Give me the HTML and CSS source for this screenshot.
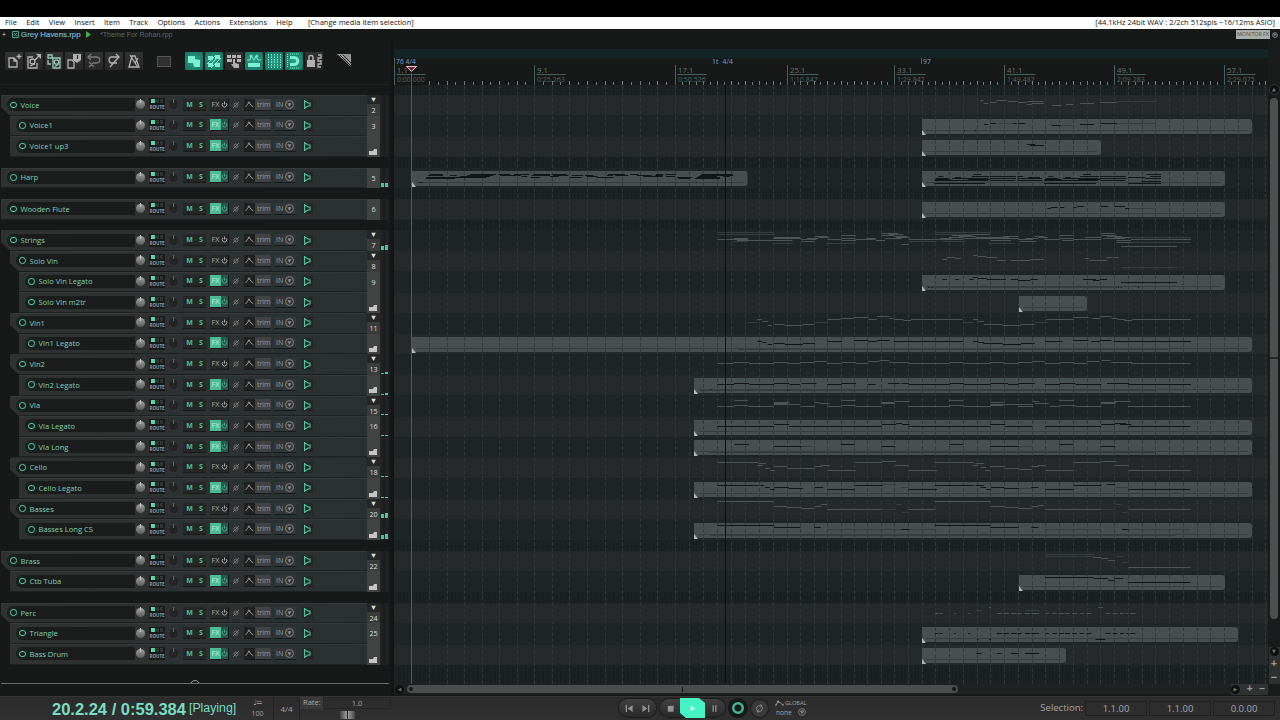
FILE: index.html
```html
<!DOCTYPE html>
<html lang="en">
<head>
    <meta charset="UTF-8">
    <meta name="viewport" content="width=device-width, initial-scale=1.0">
    <title>Grey Havens.rpp</title>
    <link rel="stylesheet" href="styles.css">
</head>
<body>

<nav class="menubar">
    <span>File</span><span>Edit</span><span>View</span><span>Insert</span><span>Item</span><span>Track</span><span>Options</span><span>Actions</span><span>Extensions</span><span>Help</span>
    <span class="last-action">[Change media item selection]</span>
    <span class="audio-info">[44.1kHz 24bit WAV : 2/2ch 512spls ~16/12ms ASIO]</span>
</nav>

<div class="tabs">
    <span class="tab-add">+</span>
    <svg class="tab-close" viewBox="0 0 7 7"><path d="M.5.5h6v6h-6zM2 2l3 3M5 2L2 5"/></svg>
    <span class="tab-active">Grey Havens.rpp</span>
    <svg class="tab-play" viewBox="0 0 5 7"><path d="M0 0l5 3.5L0 7z"/></svg>
    <span class="tab-other">*Theme For Rohan.rpp</span>
    <span class="monitor">MONITOR FX</span>
    <svg class="monitor-power" viewBox="0 0 6 6"><circle cx="3" cy="3" r="2.4"/><path d="M3 1v2.500M1.500 3h3"/></svg>
</div>

<main class="workspace">
    <section class="left">
        <div class="toolbar">
            <svg class="tool" viewBox="0 0 18 18"><path d="M4 6h5l3 3v6H4zM9 6v3h3M14 2v5M11.500 4.500h5"/></svg>
            <svg class="tool" viewBox="0 0 18 18"><path d="M8 5H3v11h9v-5M10 8l5-5"/><path class="fill" d="M11 2h5v5z"/><circle cx="7.500" cy="9.500" r="2.500"/><path d="M5 14l5-2"/></svg>
            <svg class="tool mint" viewBox="0 0 18 18"><path d="M8 6h7v10H8zM3 3h4v3H3zM3 8v4h3"/><circle cx="11.500" cy="10" r="2.200"/><path d="M9.500 14.500l4-2"/></svg>
            <svg class="tool" viewBox="0 0 18 18"><path d="M3 8h4l2 2v6H3z"/><path class="fill" d="M8 2h8v6l-4 3-4-3z"/><path class="dark" d="M12.500 3v4"/></svg>
            <svg class="tool dim" viewBox="0 0 18 18"><path d="M3 5h8c5 0 5 6 0 6H8M6 2L3 5l3 3M4 10l5 5M9 10l-5 5"/></svg>
            <svg class="tool" viewBox="0 0 18 18"><path d="M14 5H7c-4 0-4 6 0 6h5M11 2l3 3-3 3M5 15l7-8"/></svg>
            <svg class="tool" viewBox="0 0 18 18"><path d="M4 15L7 4h3l4 11zM5 3l7 11M13 6l-3 5"/></svg>
            <svg class="marquee" viewBox="0 0 15 12"><rect x=".5" y=".5" width="13" height="10"/></svg>
            <svg class="tool on" viewBox="0 0 18 18"><path class="fill" d="M3 4h7v3l5 1v7H9l-1-4H3z"/></svg>
            <svg class="tool on" viewBox="0 0 18 18"><path class="fill" d="M3 4h5v4H3zM10 3h5v4h-5zM3 11h5v4H3zM10 11h5v4h-5z"/><path d="M3 15L15 3M6 16L16 6M2 12L11 3"/></svg>
            <svg class="tool" viewBox="0 0 18 18"><path class="fill" d="M2 3h4v3H2zM7 3h4v3H7zM12 3h4v3h-4zM2 7h5v3H2zM8 7h2v4l4 1v4H9l-3-4h2zM12 7h4v3h-4z"/></svg>
            <svg class="tool on" viewBox="0 0 18 18"><path class="fill" d="M3 11h12v4H3z"/><path d="M2 8h3l1-4 3 4 2-4 2 4h3"/><circle cx="6" cy="4" r="1"/><circle cx="12" cy="4" r="1"/></svg>
            <svg class="tool on" viewBox="0 0 18 18"><path stroke-dasharray="1.500 1" d="M3.500 2v14M6.500 2v14M9.500 2v14M12.500 2v14M15.500 2v14"/></svg>
            <svg class="tool on" viewBox="0 0 18 18"><path class="thick" d="M5 5.500h4c5 0 5 7 0 7H5"/><path stroke-dasharray="1 1" d="M2.500 2v14M5 16h10M5 2h10"/></svg>
            <svg class="tool" viewBox="0 0 18 18"><path class="fill" d="M2 8h8v7H2z"/><path class="mid" d="M4 8V5c0-2 4-2 4 0v3"/><path d="M13 3h3v3h-3v3h3v3h-3v3h3"/></svg>
            <svg class="ruler-icon" viewBox="0 0 16 16"><path d="M0 1h14v13z"/><path class="cut" d="M3 2l11 11M6 2l8 8"/></svg>
        </div>
        <div class="tracks" id="tracks"></div>
        <div class="panel-end"><i></i></div>
    </section>

    <section class="arrange">
        <div class="region-strip"></div>
        <svg class="timeline" id="timeline" viewBox="394 58 874 626"></svg>
        <div class="hscroll">
            <i class="arrow">&#9664;</i>
            <div class="hthumb"><b></b><u></u><b></b></div>
            <div class="hzoom"><i class="arrow">&#9654;</i><span>+</span><span>&#8722;</span></div>
        </div>
    </section>

    <aside class="vscroll">
        <i class="arrow">&#9650;</i>
        <div class="vthumb"></div>
        <div class="vzoom"><i class="arrow">&#9660;</i><span>+</span><span>&#8722;</span></div>
    </aside>
</main>

<footer class="transport">
    <div class="time">20.2.24 / 0:59.384</div>
    <div class="state">[Playing]</div>
    <div class="bpm"><span class="beat">&#9833;=</span><span>100</span></div>
    <div class="sig">4/4</div>
    <div class="rate">
        <div><span>Rate:</span><b>1.0</b></div>
        <i></i>
    </div>
    <div class="buttons">
        <div class="pill">
            <svg viewBox="0 0 10 10"><path d="M1.500 1v8" class="line"/><path d="M8.500 1v8L3 5z"/></svg>
            <svg viewBox="0 0 10 10"><path d="M8.500 1v8" class="line"/><path d="M1.500 1v8L7 5z"/></svg>
        </div>
        <div class="pill play-pill">
            <svg viewBox="0 0 10 10"><path d="M2 2h6.500v6.500H2z"/></svg>
            <span class="play"><svg viewBox="0 0 10 10"><path d="M3 2v6l5-3z"/></svg></span>
            <svg viewBox="0 0 10 10"><path d="M3.500 1.500v7M6.500 1.500v7" class="line"/></svg>
        </div>
        <span class="record"></span>
        <span class="loop"><svg viewBox="0 0 10 10"><path d="M2 7V3.500L3.500 2H7M8 3v3.500L6.500 8H3M6 .5L8 2 6 3.500M4 6.500L2 8l2 1.500"/></svg></span>
        <div class="global">
            <div><svg viewBox="0 0 9 6"><path d="M1 5l2-3.500L5.500 3 8 5"/><circle cx="3" cy="1.500" r="1"/><circle cx="1" cy="5" r=".8"/><circle cx="8" cy="5" r=".8"/></svg>GLOBAL</div>
            <div>none <svg class="drop" viewBox="0 0 8 8"><circle cx="4" cy="4" r="3.400"/><path d="M2.500 3h3L4 5.500z"/></svg></div>
        </div>
    </div>
    <div class="selection">
        <span>Selection:</span><b>1.1.00</b><b>1.1.00</b><b>0.0.00</b>
    </div>
</footer>

<script src="script.js"></script>
</body>
</html>
```
FILE: styles.css
```css
* {
    box-sizing: border-box;
}
body {
    margin: 0;
    padding-top: 17px;
    width: 1280px;
    height: 720px;
    overflow: hidden;
    background: #000;
    color: #a5a5a5;
    font-family: "Open Sans", sans-serif;
    font-size: 8px;
    display: flex;
    flex-direction: column;
}
svg {
    display: block;
    flex: none;
}
.menubar {
    height: 12px;
    padding: 0 5px;
    background: #fff;
    color: #111;
    font-size: 7.5px;
    line-height: 10px;
    display: flex;
    gap: 9.3px;
    flex: none;
    white-space: nowrap;
}
.last-action {
    margin-left: 6px;
}
.audio-info {
    margin-left: auto;
}

/* project tabs */
.tabs {
    height: 11px;
    background: #171818;
    display: flex;
    align-items: center;
    flex: none;
    line-height: 10px;
    white-space: nowrap;
}
.tab-add {
    width: 12px;
    padding-left: 2px;
    color: #ddd;
    font-size: 7px;
}
.tab-close {
    width: 7px;
    height: 7px;
    fill: none;
    stroke: #4fa394;
}
.tab-active {
    width: 61px;
    margin: 0 4px 0 2px;
    color: #6fb4c9;
    font-family: "Liberation Sans", sans-serif;
    font-size: 7.9px;
    -webkit-text-stroke: .2px #6fb4c9;
}
.tab-play {
    width: 5px;
    height: 7px;
    fill: #3fae4b;
}
.tab-other {
    margin-left: 9px;
    color: #4f6c6b;
    font-family: "Liberation Sans", sans-serif;
    font-size: 7.1px;
}
.monitor {
    width: 34px;
    height: 9px;
    margin-left: auto;
    background: #a7aeab;
    color: #4c5250;
    font-size: 5.3px;
    line-height: 9px;
    text-align: center;
}
.monitor-power {
    width: 6px;
    height: 6px;
    margin: 0 2px;
    fill: none;
    stroke: #999;
    stroke-width: .8;
}

.workspace {
    height: 656px;
    background: #171818;
    display: flex;
    flex: none;
}
.left {
    width: 394px;
    border-right: 3px solid #131515;
    display: flex;
    flex-direction: column;
}
.toolbar {
    width: 389px;
    height: 45px;
    padding: 12px 0 0 4.500px;
    border-bottom: 1px solid #222424;
    display: flex;
    gap: 2px;
    flex: none;
}
.tool {
    width: 18px;
    height: 18px;
    background: linear-gradient(#333, #262626);
    border-radius: 1px;
    fill: none;
    stroke: #b2b2b2;
    stroke-width: 1.3;
}
.tool .fill {
    fill: #b2b2b2;
    stroke: none;
}
.tool .dark {
    stroke: #333;
}
.tool .thick {
    stroke-width: 3;
}
.tool .mid {
    stroke-width: 1.5;
}
.tool.dim {
    stroke: #777;
}
.tool.mint {
    stroke: #9ac9bb;
}
.tool.on {
    background: radial-gradient(#2ba088, #16705f);
    stroke: #7df0d4;
    stroke-width: 1;
}
.tool.on .fill {
    fill: #7df0d4;
}
.tool.on .thick {
    stroke-width: 3;
}
.marquee {
    width: 15px;
    height: 12px;
    margin: 4px 11px 0 12px;
    fill: #303030;
    stroke: #858585;
    stroke-dasharray: 1 1;
}
.ruler-icon {
    width: 16px;
    height: 16px;
    margin: 1px 0 0 12px;
    fill: #929292;
}
.ruler-icon .cut {
    fill: none;
    stroke: #222;
}

/* track control panel */
.tracks {
    width: 389px;
    padding-top: 10px;
    height: 580px;
    flex: none;
}
.track {
    height: 20.67px;
    display: flex;
}
.track.gap {
    margin-top: 10.67px;
}
.track.d0 { padding-left: 1px; }
.track.d1 { padding-left: 10px; }
.track.d2 { padding-left: 19px; }
.strip {
    flex: 1;
    padding-bottom: 1px;
    background: linear-gradient(90deg, #303131, #2e3131 50%, #2a3231 75%, #2a302f);
    border-top: 1px solid #383a39;
    border-bottom: 1px solid #1f2222;
    display: flex;
    align-items: center;
}
.track.folder .strip {
    clip-path: polygon(0 0, 100% 0, 100% 100%, 9px 100%, 0 58%);
}
.name {
    flex: 1;
    height: 13px;
    margin-left: 6px;
    padding-left: 3px;
    border-radius: 7px 0 0 7px;
    background: #1b1c1c;
    color: #7fcfb2;
    font-size: 7.6px;
    line-height: 12px;
    display: flex;
    align-items: center;
    white-space: nowrap;
}
.arm {
    width: 6.500px;
    height: 6.500px;
    margin-right: 4px;
    border: 1.6px solid #5ccba6;
    border-radius: 50%;
    box-shadow: 0 0 0 2px #15271f;
}
.knob {
    width: 9px;
    height: 9px;
    margin: 0 4.500px 0 1px;
    border-radius: 50%;
    background: linear-gradient(#a2a2a2, #5a5a5a);
    position: relative;
}
.knob::before {
    content: "";
    position: absolute;
    left: 4px;
    top: -1px;
    width: 1px;
    height: 4px;
    background: #c5c5c5;
}
.knob.pan {
    margin: 0 5px 0 4px;
    background: #232424;
    box-shadow: 0 0 0 1px #333434;
}
.knob.pan::before {
    background: #666;
}
.route {
    width: 16px;
    height: 13px;
    background: #191b1b;
    color: #9c9c9c;
    font-size: 4.500px;
    font-weight: bold;
    line-height: 5px;
    text-align: center;
}
.route i {
    display: block;
    width: 12px;
    height: 4px;
    margin: 1px 0 2px 2px;
    background: linear-gradient(90deg, #50d9ae 4px, #191b1b 4px, #191b1b 5px, #303433 5px, #303433 8px, #191b1b 8px, #191b1b 9px, #303433 9px);
}
.ms {
    width: 23px;
    height: 12px;
    background: #252827;
    color: #47c095;
    font-size: 7px;
    font-weight: bold;
    line-height: 12px;
    display: flex;
    justify-content: space-around;
}
.ms, .fx, .env, .input {
    border-bottom: 1px solid #191b1b;
}
.fx {
    width: 19px;
    height: 12px;
    margin-left: 4px;
    background: #272828;
    border-right: 1px solid #151616;
    color: #aaa;
    font-size: 7.300px;
    line-height: 11px;
    display: flex;
    align-items: center;
}
.fx span {
    width: 11px;
    text-align: center;
}
.fx svg {
    width: 7px;
    height: 7px;
    fill: none;
    stroke: #b5b5b5;
    stroke-width: .9;
}
.fx.active {
    background: #265747;
    color: #c9efe2;
}
.fx.active span {
    background: #4abb94;
}
.fx.active svg {
    stroke: #49ae8b;
}
.phase {
    width: 6px;
    height: 6px;
    margin: 0 5px 0 4px;
    fill: none;
    stroke: #777;
    stroke-width: .9;
}
.env {
    width: 27px;
    height: 12px;
    background: #414242;
    color: #989898;
    font-size: 7px;
    line-height: 11px;
    display: flex;
}
.env svg {
    width: 11px;
    height: 11px;
    margin-right: 2px;
    background: #1f2020;
    fill: none;
    stroke: #9a9a9a;
    stroke-width: .9;
}
.input {
    width: 22px;
    height: 12px;
    margin-left: 3px;
    background: #333636;
    color: #9c9c9c;
    font-size: 7px;
    line-height: 11px;
    display: flex;
    align-items: center;
    justify-content: space-evenly;
}
.input svg, .drop {
    width: 9px;
    height: 9px;
    fill: #8c8c8c;
}
.input circle, .drop circle {
    fill: none;
    stroke: #8c8c8c;
    stroke-width: .8;
}
.speaker {
    width: 11px;
    height: 11px;
    margin: 0 54px 0 6px;
    background: #222827;
    fill: none;
    stroke: #4fc79d;
    stroke-width: 1.1;
}
.number {
    width: 13px;
    background: #414343;
    color: #dedede;
    font-size: 7.2px;
    line-height: 20px;
    text-align: center;
}
.folder .number {
    background: linear-gradient(#252727 45%, #3a3c3c 45%);
    line-height: 10px;
}
.number b {
    display: block;
    height: 10px;
    font-size: 7.500px;
    line-height: 9px;
}
.number svg {
    width: 8px;
    height: 6px;
    margin: 12.500px 0 0 2px;
    fill: #c6c6c6;
}
.meter {
    width: 9px;
    padding: 0 1px 1px;
    background: linear-gradient(90deg, #222 3px, #171818 4px, #222 5px);
    display: flex;
    align-items: flex-end;
    gap: 1px;
}
.meter i {
    width: 3px;
    background: #44c99f;
}
.panel-end {
    width: 388px;
    height: 19px;
    margin-left: 1px;
    border-bottom: 1px solid #6c6d70;
    overflow: hidden;
}
.panel-end i {
    display: block;
    width: 10px;
    height: 10px;
    margin: 15px auto 0;
    border: 1.500px solid #999;
    border-radius: 50%;
}

/* arrange view */
.arrange {
    width: 874px;
    padding-top: 9px;
}
.region-strip {
    height: 9px;
    background: #142526;
}
.timeline {
    width: 874px;
    height: 626px;
    font-family: "Open Sans", sans-serif;
}
.lane-even { fill: #252929; }
.lane-odd { fill: #1f2526; }
.grid {
    stroke: #2d3535;
    stroke-dasharray: 4 2;
}
.grid-fine { stroke: #181d1f; }
.item { fill: #48504f; }
.item-grid {
    stroke: #343b3b;
    stroke-dasharray: 4 2;
}
.item-edge { stroke: #363d3c; }
.handle { fill: #b4b8b8; }
.notes {
    fill: none;
    stroke: #111516;
}
.notes.ghost { stroke: #4d5454; }
.notes.soft { stroke: #363d3d; }
.ruler-line { stroke: #47605e; }
.ruler-tick { stroke: #717979; }
.ruler-beat {
    fill: #647574;
    font-size: 7.8px;
}
.ruler-time {
    fill: #4c6965;
    font-size: 7px;
}
.tempo {
    fill: #79a2d6;
    font-size: 6.800px;
}
.edit-cursor { stroke: #8a4150; }
.play-cursor { stroke: #0d1010; }
.cursor-head {
    fill: #7b2338;
    stroke: #ddc8cd;
}
.hscroll {
    height: 10px;
    background: #202121;
    display: flex;
    align-items: center;
}
.arrow {
    width: 9px;
    height: 9px;
    border-radius: 50%;
    background: #0f1010;
    color: #6c6c6c;
    font: normal 5px/9px "DejaVu Sans", sans-serif;
    text-align: center;
}
.hscroll > .arrow {
    margin: 0 3px 0 1px;
}
.hthumb {
    width: 551px;
    height: 8px;
    padding: 0 2px;
    border-radius: 4px;
    background: #4b4c4c;
    display: flex;
    align-items: center;
    justify-content: space-between;
}
.hthumb b {
    width: 4px;
    height: 4px;
    border-radius: 50%;
    background: #191919;
}
.hthumb u {
    width: 1px;
    height: 5px;
    background: #111;
}
.hzoom {
    width: 37px;
    height: 11px;
    margin-left: auto;
    background: #303333;
    color: #999;
    font: bold 10px/10px "Liberation Sans", sans-serif;
    display: flex;
    align-items: center;
    justify-content: space-between;
    padding-right: 3px;
}
.vscroll {
    width: 12px;
    padding: 45px 1px 0;
    background: #1a1b1b;
    display: flex;
    flex-direction: column;
    align-items: center;
}
.vscroll > .arrow {
    outline: 1px solid #353636;
}
.vthumb {
    width: 8px;
    height: 521px;
    margin-top: 4px;
    border-radius: 4px;
    background: linear-gradient(#4e4f4f 259px, #262626 259px, #262626 261px, #4e4f4f 261px);
}
.vzoom {
    width: 11px;
    height: 37px;
    margin-top: 28px;
    background: #2f3131;
    color: #999;
    font: bold 11px/13px "Liberation Sans", sans-serif;
    display: flex;
    flex-direction: column;
    align-items: center;
    justify-content: space-between;
}

/* transport bar */
.transport {
    height: 24px;
    background: linear-gradient(#2b2b2b, #303030);
    border-top: 1px solid #353535;
    display: flex;
    align-items: center;
    flex: none;
    white-space: nowrap;
}
.time {
    width: 137px;
    margin-left: 52px;
    color: #76dfc3;
    font: bold 16.500px/22px "Liberation Sans", sans-serif;
}
.state {
    width: 53px;
    color: #76dfc3;
    font: 12.300px/22px "Liberation Sans", sans-serif;
    padding-bottom: 1px;
}
.bpm {
    width: 32px;
    height: 24px;
    border-right: 1px solid #242424;
    font-size: 7px;
    line-height: 12px;
    text-align: center;
    display: flex;
    flex-direction: column;
}
.bpm .beat {
    font: 8px/11px "DejaVu Sans", sans-serif;
    letter-spacing: -1px;
}
.sig {
    width: 26px;
    height: 24px;
    border-right: 1px solid #242424;
    line-height: 23px;
    text-align: center;
}
.rate {
    width: 92px;
    height: 24px;
    font-size: 7.500px;
    line-height: 11px;
}
.rate div {
    display: flex;
}
.rate span {
    width: 23px;
    padding-left: 3px;
    background: #3a3a3a;
}
.rate b {
    width: 68px;
    border: 1px solid #252525;
    font-weight: normal;
    line-height: 10px;
    text-align: center;
}
.rate i {
    display: block;
    width: 15px;
    height: 8px;
    margin: 2px 0 0 40px;
    background: linear-gradient(90deg, #444, #999 45%, #222 50%, #999 55%, #444);
}
.buttons {
    margin: -1px 0 0 227px;
    display: flex;
    align-items: center;
}
.pill {
    width: 37px;
    height: 18px;
    border-radius: 9px;
    background: linear-gradient(#414141, #292929);
    box-shadow: 0 0 1px 1px #1c1c1c;
    display: flex;
    align-items: center;
    justify-content: space-evenly;
}
.pill svg, .loop svg {
    width: 9px;
    height: 9px;
    fill: #929292;
}
.pill .line {
    stroke: #929292;
    stroke-width: 1.5;
}
.play-pill {
    width: 65px;
    margin-left: 4px;
    justify-content: space-between;
    padding: 0 6px;
}
.play {
    width: 25px;
    height: 20px;
    background: #46f3c2;
    clip-path: polygon(0 0, 19px 0, 100% 5px, 100% 100%, 6px 100%, 0 15px);
    display: flex;
    align-items: center;
    justify-content: center;
}
.play svg {
    fill: #d6fff2;
}
.record {
    width: 20px;
    height: 20px;
    margin: 0 3px 0 3px;
    border: 4px solid #151919;
    border-radius: 50%;
    background: radial-gradient(#151919 3px, #49b493 4px);
}
.loop {
    width: 17px;
    height: 17px;
    border-radius: 50%;
    background: #393939;
    box-shadow: 0 0 1px 1px #1c1c1c;
    display: flex;
    align-items: center;
    justify-content: center;
}
.loop svg {
    fill: none;
    stroke: #929292;
}
.global {
    margin: -1px 0 0 7px;
    font-size: 5.600px;
    line-height: 9px;
}
.global div {
    display: flex;
    align-items: center;
    gap: 1px;
}
.global div + div {
    gap: 6px;
    padding-left: 1px;
    font-size: 6.500px;
}
.global svg {
    width: 9px;
    height: 6px;
    fill: #aaa;
}
.global path {
    fill: none;
    stroke: #aaa;
    stroke-width: .8;
}
.global .drop {
    width: 8px;
    height: 8px;
}
.selection {
    margin: 0 5px 0 auto;
    font-size: 9.500px;
    line-height: 13px;
    display: flex;
    gap: 2px;
}
.selection b {
    width: 62px;
    height: 15px;
    border: 1px solid #212121;
    background: #2d2d2d;
    font-weight: normal;
    text-align: center;
}
```
FILE: script.js
```js
// name, depth, number, options (F folder, X fx active, G gap above, E end of folder), meter heights
const tracks = [
    ['Voice', 0, 2, 'F'],
    ['Voice1', 1, 3, 'X'],
    ['Voice1 up3', 1, 4, 'XE'],
    ['Harp', 0, 5, 'XG', 4, 4],
    ['Wooden Flute', 0, 6, 'XG'],
    ['Strings', 0, 7, 'FG', 4, 5],
    ['Solo Vln', 1, 8, 'F'],
    ['Solo Vln Legato', 2, 9, 'X'],
    ['Solo Vln m2tr', 2, 10, 'XE'],
    ['Vln1', 1, 11, 'F'],
    ['Vln1 Legato', 2, 12, 'XE'],
    ['Vln2', 1, 13, 'F', 1, 2],
    ['Vln2 Legato', 2, 14, 'XE', 1, 2],
    ['Vla', 1, 15, 'F', 1, 1],
    ['Vla Legato', 2, 16, 'X', 1, 1],
    ['Vla Long', 2, 17, 'XE'],
    ['Cello', 1, 18, 'F', 1, 1],
    ['Cello Legato', 2, 19, 'XE', 1, 1],
    ['Basses', 1, 20, 'F', 4, 5],
    ['Basses Long CS', 2, 21, 'XE', 4, 5],
    ['Brass', 0, 22, 'FG'],
    ['Ctb Tuba', 1, 23, 'XE'],
    ['Perc', 0, 24, 'FG'],
    ['Triangle', 1, 25, 'X'],
    ['Bass Drum', 1, 26, 'XE']
];

const ROW = 20.67, GAP = 10.67;
const laneTop = {};
let html = '', y = 95;

for (const [name, depth, num, opt, ml, mr] of tracks) {
    const has = c => opt.includes(c);
    if (has('G')) y += GAP;
    laneTop[num] = y;
    y += ROW;
    let label = num;
    if (has('F')) label = `<b>▼</b>${num}`;
    if (has('E')) label = '<svg viewBox="0 0 8 6"><path d="M0 2h4l1-2h3v6H0z"/></svg>';
    html += `
    <div class="track d${depth} ${has('F') ? 'folder' : ''} ${has('G') ? 'gap' : ''}">
        <div class="strip">
            <div class="name"><i class="arm"></i>${name}</div>
            <i class="knob"></i>
            <div class="route"><i></i>ROUTE</div>
            <i class="knob pan"></i>
            <div class="ms"><span>M</span><span>S</span></div>
            <div class="fx ${has('X') ? 'active' : ''}"><span>FX</span><svg viewBox="0 0 7 7"><path d="M2 2a2.300 2.300 0 1 0 3 0M3.500.5v3"/></svg></div>
            <svg class="phase" viewBox="0 0 6 6"><circle cx="3" cy="3" r="2"/><path d="M0 6l6-6"/></svg>
            <div class="env"><svg viewBox="0 0 11 11"><path d="M1.500 8L5 3.500 7 6l2.500 2"/><circle cx="5" cy="3.500" r=".7"/></svg>trim</div>
            <div class="input">IN<svg viewBox="0 0 8 8"><circle cx="4" cy="4" r="3.500"/><path d="M2.200 2.800h3.600L4 6z"/></svg></div>
            <svg class="speaker" viewBox="0 0 11 11"><path d="M2.500 1v9M3 2l3 2h2v3H6L3 9"/></svg>
        </div>
        <div class="number">${label}</div>
        <div class="meter">${ml ? `<i style="height:${ml}px"></i><i style="height:${mr}px"></i>` : ''}</div>
    </div>`;
}
document.getElementById('tracks').innerHTML = html;

// media items: track number, start, end
const items = [
    [3, 922, 1252], [4, 922, 1101], [5, 412, 747.5], [5, 922, 1225], [6, 922, 1225],
    [9, 922, 1225], [10, 1019, 1087], [12, 412, 1252], [14, 694, 1252], [16, 694, 1252],
    [17, 694, 1252], [19, 694, 1252], [21, 694, 1252], [23, 1019, 1225],
    [25, 922, 1238], [26, 922, 1066]
];

// ruler labels, the tempo changes the measure width
const marks = [
    [394.5, '1.1', '0:00.000'], [534.5, '9.1', '0:25.263'], [675.5, '17.1', '0:50.526'],
    [787.5, '25.1', '1:10.847'], [894.5, '33.1', '1:29.842'], [1004.5, '41.1', '1:49.487'],
    [1114.5, '49.1', '2:09.283'], [1224.5, '57.1', '2:29.075'], [1335, '', '']
];

const measures = [];
for (let i = 0; i < marks.length - 1; i++) {
    const w = (marks[i + 1][0] - marks[i][0]) / 8;
    for (let j = 0; j < 8; j++) measures.push([marks[i][0] + j * w, w]);
}
const snap = v => Math.floor(v) + .5;
const line = (cls, x1, y1, x2, y2) => `<path class="${cls}" d="M${x1} ${y1}L${x2} ${y2}"/>`;

let out = '<rect x="394" y="58" width="874" height="27" fill="#171818"/><rect x="394" y="85" width="874" height="599" fill="#1c2124"/>';

// beat lines show only between the lanes
for (const [x, w] of measures) {
    if (x > 1267) continue;
    for (let q = 1; q < 4; q++) out += line('grid-fine', snap(x + q * w / 4), 85, snap(x + q * w / 4), 684);
}
for (const [, , num] of tracks) {
    out += `<rect class="${num % 2 ? 'lane-odd' : 'lane-even'}" x="394" y="${laneTop[num].toFixed(1)}" width="874" height="${ROW}"/>`;
}
for (const [x, w] of measures) {
    if (x > 1267) continue;
    if (x > 412) out += line('grid', snap(x), 86, snap(x), 684);
    if (x > 425) out += line('ruler-tick', snap(x), 81, snap(x), 85);
    if (x > 412) out += line('ruler-tick', snap(x + w / 2), 82, snap(x + w / 2), 85);
}
for (const [num, a, b] of items) {
    const t = Math.round(laneTop[num] + 3.200), h = 15;
    out += `<path class="item" d="M${a} ${t}H${b - 3}q3 0 3 3v${h - 6}q0 3-3 3H${a}z"/>`;
    for (const [x] of measures) {
        if (x > a + 3 && x < b - 2) out += line('item-grid', snap(x), t, snap(x), t + h);
    }
    out += line('item-edge', a + 4, t + 11.5, b - 4, t + 11.5);
    out += `<path class="handle" d="M${a} ${t + h - 4}v5h4z"/>`;
}

// notes are [start, end, y] triples on a zoomed canvas with origin x0, y0
function notes(cls, x0, y0, k, list) {
    let d = '';
    for (let i = 0; i < list.length; i += 3) {
        d += `M${(x0 + list[i] / k).toFixed(1)} ${snap(y0 + list[i + 2] / 3)}H${(x0 + list[i + 1] / k).toFixed(1)}`;
    }
    out += `<path class="notes ${cls}" d="${d}"/>`;
}

// voice
notes('ghost', 880, 0, 3, [300,310,302, 310,325,310, 330,350,307, 350,380,301, 383,412,305, 415,440,308, 440,455,312, 442,490,304, 455,492,310, 515,545,316, 558,580,314, 600,642,310, 660,712,307]);
notes('soft', 880, 0, 3, [712,832,303, 355,435,370, 545,580,375, 712,830,370, 250,760,391, 390,600,454, 790,820,624]);
notes('', 880, 0, 3, [312,325,373, 330,348,370, 398,410,370, 414,436,370, 515,543,375, 600,642,373, 662,711,370, 253,256,392, 285,289,392, 440,465,433, 450,492,436]);
// harp
notes('', 390, 45, 3, [120,158,389, 115,160,392, 110,168,396, 106,165,399, 180,200,392, 168,235,396, 165,195,399, 240,318,388, 232,310,391, 210,300,395, 205,290,398, 325,360,388, 330,366,391, 372,418,388, 362,392,392, 395,412,395, 430,480,388, 425,478,392, 422,450,396, 455,480,391, 485,530,389, 490,535,392, 480,506,395, 545,580,392, 540,575,396, 585,610,392, 590,622,395, 620,640,398, 655,705,388, 650,668,392, 635,670,398, 675,715,391, 720,745,388, 740,785,391, 760,790,395, 798,820,387, 795,818,391, 790,818,395, 826,858,389, 828,855,393, 860,905,396, 865,900,400, 935,1028,388, 930,1030,391, 925,980,394, 920,990,397, 915,990,400, 1000,1020,394, 88,92,412, 94,98,412, 918,921,412]);
notes('', 880, 0, 3, [175,190,530, 168,205,534, 165,212,538, 163,238,542, 163,315,550, 225,243,532, 215,270,536, 235,280,541, 280,303,523, 275,328,530, 255,325,534, 265,330,538, 270,325,542, 330,408,530, 330,408,535, 332,406,541, 412,430,529, 412,486,536, 412,488,541, 445,480,532, 505,520,530, 498,535,534, 494,545,538, 492,570,542, 492,648,550, 555,573,532, 548,600,536, 565,610,541, 610,633,523, 600,658,530, 585,655,534, 595,660,538, 600,655,542, 660,738,530, 660,740,535, 662,736,541, 800,843,523, 810,843,530, 745,795,531, 795,843,536, 785,843,543, 745,843,550]);
// flute
notes('', 880, 0, 3, [502,512,626, 512,533,622, 540,553,623, 580,590,622, 592,611,619, 662,685,619, 703,735,619, 735,748,625, 450,468,640]);
notes('soft', 880, 0, 3, [750,810,624, 450,790,641]);
// strings folder
notes('soft', 700, 225, 2.703, [48,200,22, 48,200,27, 635,785,22, 635,785,27, 92,130,50, 200,250,54, 340,420,54, 565,640,50, 655,720,50, 1165,1327,36, 1165,1327,52, 780,850,54]);
notes('ghost', 700, 225, 2.703, [48,130,43, 92,130,39, 100,200,45, 200,236,37, 200,273,40, 200,250,46, 236,270,36, 273,315,44, 273,310,49, 290,320,40, 310,345,34, 320,350,38, 344,382,44, 382,422,31, 382,420,39, 382,422,46, 420,475,43, 450,475,40, 475,500,46, 490,535,25, 490,525,31, 510,550,29, 525,560,34, 500,545,40, 530,567,38, 545,565,58, 565,712,43, 650,680,39, 673,712,36, 680,735,31, 700,745,35, 735,785,28, 712,785,41, 745,785,37, 785,835,38, 770,860,41, 785,840,46, 820,860,35, 860,900,44, 865,910,49, 880,915,40, 905,930,35, 915,940,38, 930,972,44, 972,1010,32, 972,1010,40, 980,1010,46, 1010,1085,43, 1040,1085,38, 1083,1120,26, 1083,1125,31, 1100,1140,34, 1120,1165,37, 1090,1150,41, 1125,1165,45, 1125,1165,52, 1165,1327,43, 1138,1290,64]);
// solo violin
notes('ghost', 700, 225, 2.703, [655,668,102, 668,690,97, 690,705,99, 738,750,90, 750,775,94, 775,803,96, 803,827,106, 840,893,107, 893,900,102, 900,930,103, 1040,1052,101, 1052,1072,107, 1072,1100,105, 1098,1113,97, 1115,1133,98]);
notes('soft', 700, 225, 2.703, [1138,1290,126, 617,1130,186, 1190,1260,185, 876,920,248, 128,155,293, 309,345,293, 710,740,293, 905,940,293]);
notes('', 700, 225, 2.703, [655,668,163, 690,700,163, 728,740,163, 738,750,157, 750,775,160, 775,803,162, 803,827,164, 840,860,162, 860,893,165, 893,913,162, 1035,1070,162, 1062,1080,165, 1080,1100,163, 1138,1290,172, 616,619,186, 626,629,186, 1130,1133,186, 1137,1140,186, 1184,1187,186]);
// violins 1
notes('ghost', 700, 225, 2.703, [155,168,283, 168,185,290, 183,195,300, 200,229,297, 229,278,301, 278,309,297, 344,380,282, 380,416,280, 416,455,277, 455,478,282, 478,512,275, 512,524,279, 524,550,283, 550,570,287, 570,710,283, 738,752,283, 752,768,290, 766,818,298, 818,868,301, 868,905,297, 935,1010,283, 1010,1050,278, 1060,1082,280, 1082,1112,275, 1112,1130,280, 1130,1150,283, 1147,1168,287, 1168,1327,283]);
notes('', 700, 225, 2.703, [155,168,349, 168,180,352, 183,195,358, 200,229,355, 229,278,357, 278,311,355, 344,384,349, 416,455,346, 455,478,349, 478,512,346, 524,712,349, 738,752,349, 752,768,352, 766,785,356, 785,818,355, 818,868,358, 868,905,355, 933,980,349, 1008,1050,346, 1058,1082,349, 1082,1112,346, 1118,1327,349]);
notes('soft', 700, 225, 2.703, [103,1265,373, 0,1230,496]);
// violins 2
notes('ghost', 700, 225, 2.703, [48,92,415, 92,133,412, 133,200,415, 200,238,412, 238,270,415, 270,309,412, 309,343,409, 343,382,415, 382,422,412, 422,455,415, 455,485,409, 485,512,406, 512,545,411, 545,565,412, 565,675,415, 675,712,412, 712,785,415, 785,823,412, 823,860,415, 860,898,412, 898,932,409, 932,972,415, 972,1010,412, 1010,1045,415, 1045,1080,410, 1085,1110,406, 1110,1168,412, 1165,1327,415]);
notes('', 700, 225, 2.703, [48,92,478, 92,133,475, 133,200,478, 200,242,475, 242,270,478, 275,315,475, 344,382,478, 382,422,475, 455,475,478, 508,540,475, 545,565,475, 565,675,478, 675,714,475, 714,785,478, 785,833,475, 833,860,478, 860,905,475, 932,972,478, 972,1015,475, 1015,1085,478, 1100,1130,475, 1120,1160,476, 1158,1327,478, 30,33,494, 128,131,496, 236,239,496]);
// violas
notes('ghost', 700, 225, 2.703, [48,92,544, 92,130,527, 92,130,542, 130,200,544, 200,243,531, 200,236,536, 200,270,539, 273,311,543, 310,323,531, 323,350,535, 344,382,544, 382,420,527, 382,420,542, 420,490,544, 490,525,532, 490,528,536, 527,567,529, 563,675,544, 673,712,527, 673,712,542, 712,785,544, 785,823,532, 785,900,537, 785,820,540, 860,900,543, 898,916,530, 905,943,536, 945,972,544, 972,1010,527, 972,1015,542, 1015,1085,544, 1083,1125,532, 1083,1123,536, 1120,1165,528, 1158,1327,544]);
notes('', 680, 395, 2.613, [98,246,94, 246,285,88, 285,315,94, 315,352,94, 352,385,94, 385,527,94, 527,565,89, 565,580,85, 580,600,88, 597,810,94, 810,850,88, 850,920,94, 955,1100,94, 1100,1137,89, 1137,1165,85, 1150,1180,88, 1172,1334,94, 143,180,149, 420,457,149, 704,740,149, 991,1028,149, 246,318,154, 527,562,154, 810,885,154, 1100,1137,154]);
notes('soft', 680, 395, 2.613, [58,1295,109, 75,1240,171, 318,345,154, 885,918,154]);
// cello
notes('ghost', 680, 395, 2.613, [98,205,202, 205,225,206, 203,217,211, 223,235,219, 235,249,226, 246,280,214, 280,323,220, 323,352,219, 352,370,215, 368,392,211, 385,460,226, 457,527,202, 527,565,199, 562,597,211, 597,672,226, 666,768,202, 772,794,205, 765,779,211, 785,800,218, 797,811,227, 810,848,214, 848,885,220, 885,920,222, 918,937,215, 935,955,211, 955,1028,226, 1028,1100,202, 1100,1140,199, 1137,1173,211, 1172,1334,226]);
notes('', 680, 395, 2.613, [98,205,271, 210,220,271, 223,235,277, 235,248,283, 246,284,277, 284,320,280, 352,374,277, 385,457,283, 457,530,271, 597,672,283, 666,768,271, 772,794,271, 785,800,278, 800,813,283, 813,848,277, 848,885,280, 918,937,277, 955,1028,283, 1028,1102,271, 1115,1137,269, 1172,1334,283]);
notes('soft', 680, 395, 2.613, [90,1280,296, 530,565,269, 580,597,277, 885,918,280, 1140,1173,277]);
// basses
notes('ghost', 680, 395, 2.613, [98,246,319, 246,280,333, 280,317,337, 317,352,341, 352,370,334, 368,385,329, 385,527,343, 597,668,343, 666,811,319, 811,850,334, 850,883,338, 883,920,341, 918,937,334, 937,952,330, 955,1100,343, 1172,1334,343]);
notes('soft', 680, 395, 2.613, [527,565,343, 565,580,329, 580,597,353, 1100,1135,343, 1137,1153,329, 1153,1170,353, 80,1295,420, 385,580,403, 597,670,403, 1172,1334,403, 955,1100,403]);
notes('', 680, 395, 2.613, [98,246,391, 246,315,397, 350,368,397, 579,597,403, 666,811,391, 811,885,397, 918,937,397, 1155,1172,403]);
// brass
notes('soft', 680, 395, 2.613, [955,1083,479, 955,1083,483, 1140,1160,484, 1155,1170,503]);
notes('ghost', 680, 395, 2.613, [1080,1100,486, 1100,1118,490, 1118,1137,496, 1172,1334,517]);
notes('', 680, 395, 2.613, [955,1080,547, 1080,1118,550, 1118,1137,555, 1135,1158,550, 1172,1334,562]);
// percussion
const hits = [666,675, 678,687, 716,721, 753,759, 828,842, 845,860, 865,880, 883,893, 901,915, 918,938, 955,965, 972,985, 990,1003, 1006,1019, 1025,1037, 1044,1055, 1062,1075, 1112,1125, 1131,1143, 1150,1160, 1165,1172, 1176,1190];
for (let i = 0; i < hits.length; i += 2) {
    notes('ghost', 680, 395, 2.613, [hits[i], hits[i + 1], 655]);
    notes('', 680, 395, 2.613, [hits[i], hits[i + 1], 715]);
}
notes('ghost', 680, 395, 2.613, [808,813,637, 1093,1105,637]);
notes('soft', 680, 395, 2.613, [775,790,647, 901,938,646, 828,1085,731, 1115,1455,731]);
notes('', 680, 395, 2.613, [776,780,733, 808,813,733, 1086,1112,733, 774,788,775, 828,840,775, 865,885,775, 901,938,775]);

// ruler
for (const [x, beat, time] of marks) {
    if (!beat) continue;
    out += line('ruler-line', x, 65, x, 85) + line('ruler-line', x + 2, 74.5, x + 31, 74.5);
    out += `<text class="ruler-beat" x="${x + 2.5}" y="72.800">${beat}</text><text class="ruler-time" x="${x + 2.5}" y="81.500">${time}</text>`;
}
out += line('ruler-line', 394.5, 58, 394.5, 85) + line('ruler-line', 921.5, 58, 921.5, 64);
out += '<text class="tempo" x="396" y="64">76 4/4</text><text class="tempo" x="712" y="64">1t</text><text class="tempo" x="722.500" y="64">4/4</text><text class="tempo" x="923" y="64">97</text>';
out += line('play-cursor', 725.5, 85, 725.5, 684) + line('edit-cursor', 411.5, 73, 411.5, 684);
out += '<path class="cursor-head" d="M406.500 66.500h10l-5 5z"/>';

document.getElementById('timeline').innerHTML = out;
```
